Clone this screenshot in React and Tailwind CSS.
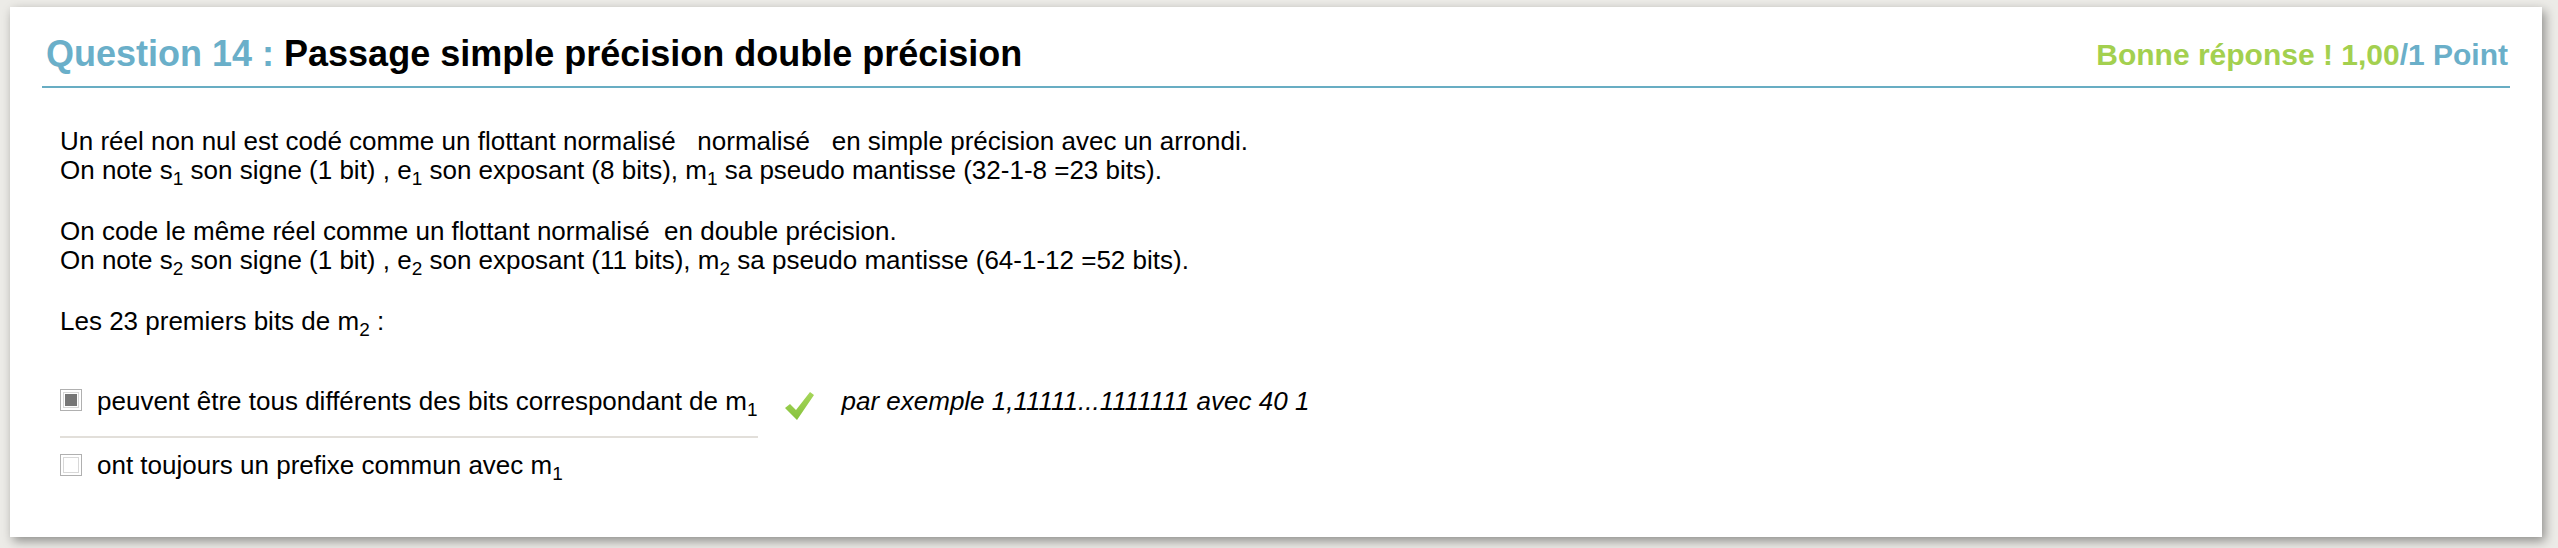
import React from "react";

function Box({ checked }) {
  return (
    <div className="w-[22px] h-[22px] shrink-0 border border-[#b0b0b0] bg-white p-[2px]">
      <div className="w-full h-full border-[1px] border-[#d8d8d8] p-[1px]">
        {checked ? <div className="w-full h-full bg-[#777777]" /> : null}
      </div>
    </div>
  );
}

function Check() {
  return (
    <svg width="31" height="30" viewBox="0 0 31 30" className="shrink-0">
      <defs>
        <linearGradient id="g" x1="0" y1="0" x2="0" y2="1">
          <stop offset="0" stopColor="#a6d65a" />
          <stop offset="1" stopColor="#86c23c" />
        </linearGradient>
      </defs>
      <path d="M1 17 L6 13 L12 19 L26 1 L30 4 L13 29 Z" fill="url(#g)" />
    </svg>
  );
}

const Sub = ({ children }) => (
  <sub className="text-[19px] bottom-[-6px]">{children}</sub>
);

export default function App() {
  return (
    <div
      className="w-[2558px] h-[548px] bg-[#ecebe7] pt-[7px] pl-[10px]"
      style={{ fontFamily: '"Liberation Sans", Arial, sans-serif' }}
    >
      <div className="w-[2532px] h-[530px] bg-white shadow-[3px_4px_10px_rgba(0,0,0,0.4)] pt-[27px]">
        <div className="mx-[32px] border-b-[2px] border-[#68adc3] pb-[12px] flex justify-between items-end pl-[4px] pr-[2px]">
          <div className="text-[36px] leading-[40px] font-bold text-black">
            <span className="text-[#6aafc9]">Question 14 : </span>
            Passage simple précision double précision
          </div>
          <div className="text-[30px] leading-[34px] font-bold pb-[2px]">
            <span className="text-[#a3d04f]">Bonne réponse ! 1,00</span>
            <span className="text-[#6aafc9]">/1 Point</span>
          </div>
        </div>
        <div className="pl-[50px] pt-[39px] text-[26px] leading-[29px] text-black">
          <p>
            Un réel non nul est codé comme un flottant normalisé&nbsp;&nbsp; normalisé&nbsp;&nbsp; en simple précision avec un arrondi.
            <br />
            On note s<Sub>1</Sub> son signe (1 bit) , e<Sub>1</Sub> son exposant (8 bits), m<Sub>1</Sub> sa pseudo mantisse (32-1-8 =23 bits).
          </p>
          <p className="mt-[32px]">
            On code le même réel comme un flottant normalisé&nbsp; en double précision.
            <br />
            On note s<Sub>2</Sub> son signe (1 bit) , e<Sub>2</Sub> son exposant (11 bits), m<Sub>2</Sub> sa pseudo mantisse (64-1-12 =52 bits).
          </p>
          <p className="mt-[32px]">
            Les 23 premiers bits de m<Sub>2</Sub> :
          </p>
          <div className="mt-[51px] flex items-start">
            <div className="border-b-[2px] border-[#e2dfda] pb-[20px] flex items-start gap-[15px] whitespace-nowrap">
              <div className="mt-[2px]">
                <Box checked />
              </div>
              <span>
                peuvent être tous différents des bits correspondant de m<Sub>1</Sub>
              </span>
            </div>
            <div className="ml-[26px] mt-[4px]">
              <Check />
            </div>
            <span className="ml-[27px] italic whitespace-nowrap">par exemple 1,11111...1111111 avec 40 1</span>
          </div>
          <div className="mt-[13px] flex items-start gap-[15px] whitespace-nowrap">
            <div className="mt-[3px]">
              <Box />
            </div>
            <span>
              ont toujours un prefixe commun avec m<Sub>1</Sub>
            </span>
          </div>
        </div>
      </div>
    </div>
  );
}
